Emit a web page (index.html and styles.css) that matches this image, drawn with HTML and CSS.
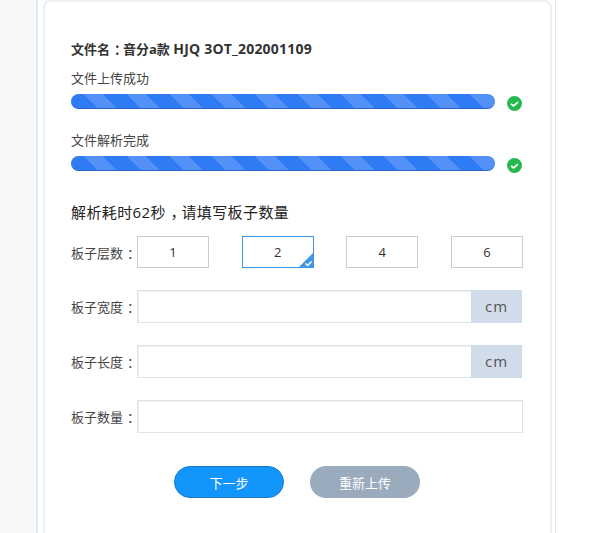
FILE: index.html
```html
<!DOCTYPE html>
<html lang="zh-CN">
<head>
    <meta charset="UTF-8">
    <title>文件解析</title>
    <link rel="stylesheet" href="styles.css">
</head>
<body>
    <div class="page">
        <div class="side"></div>
        <div class="main">
            <div class="card">
                <h3 class="file-name">文件名<span class="punct">：</span>音分a款 <span class="latin">HJQ 3OT_202001109</span></h3>

                <div class="progress-group">
                    <div class="progress-label">文件上传成功</div>
                    <div class="progress-row">
                        <div class="bar"></div>
                        <svg class="ok-icon" viewBox="0 0 16 16"><circle cx="8" cy="8" r="8" fill="#27b84f"/><path d="M4.2 8.3l2.7 2.3 4.8-4" fill="none" stroke="#fff" stroke-width="1.8"/></svg>
                    </div>
                </div>
                <div class="progress-group">
                    <div class="progress-label">文件解析完成</div>
                    <div class="progress-row">
                        <div class="bar"></div>
                        <svg class="ok-icon" viewBox="0 0 16 16"><circle cx="8" cy="8" r="8" fill="#27b84f"/><path d="M4.2 8.3l2.7 2.3 4.8-4" fill="none" stroke="#fff" stroke-width="1.8"/></svg>
                    </div>
                </div>

                <h4 class="hint">解析耗时62秒<span class="punct">，</span>请填写板子数量</h4>

                <div class="form-row">
                    <label>板子层数<span class="punct">：</span></label>
                    <div class="options">
                        <div class="option">1</div>
                        <div class="option active">2
                            <svg class="corner" viewBox="0 0 16 16"><path d="M16 0V16H0Z" fill="#3f97e8"/><path d="M7.5 11.5l2.2 2 3.8-4" fill="none" stroke="#fff" stroke-width="1.6"/></svg>
                        </div>
                        <div class="option">4</div>
                        <div class="option">6</div>
                    </div>
                </div>

                <div class="form-row">
                    <label for="width">板子宽度<span class="punct">：</span></label>
                    <div class="input-box">
                        <input type="text" id="width">
                        <span class="unit">cm</span>
                    </div>
                </div>
                <div class="form-row">
                    <label for="length">板子长度<span class="punct">：</span></label>
                    <div class="input-box">
                        <input type="text" id="length">
                        <span class="unit">cm</span>
                    </div>
                </div>
                <div class="form-row">
                    <label for="count">板子数量<span class="punct">：</span></label>
                    <div class="input-box full">
                        <input type="text" id="count">
                    </div>
                </div>

                <div class="actions">
                    <button class="btn btn-primary">下一步</button>
                    <button class="btn btn-gray">重新上传</button>
                </div>
            </div>
        </div>
    </div>
</body>
</html>
```

FILE: styles.css
```css
* {
    box-sizing: border-box;
}

html, body {
    height: 100%;
}

body {
    margin: 0;
    overflow: hidden;
    background-color: #fff;
    color: #333;
    font-family: "Open Sans", "Noto Sans CJK SC", sans-serif;
    font-size: 13px;
}

.page {
    display: flex;
    height: 533px;
}

.side {
    width: 36px;
    background-color: #f7f7f7;
}

.main {
    width: 520px;
    padding: 0 3px 0 5px;
    border-left: 2px solid #dce9f6;
    border-right: 1px solid #e3ebf2;
}

.card {
    height: 100%;
    padding: 38px 26px 0;
    border: 2px solid #ebf0f5;
    border-bottom: none;
    border-radius: 7px 7px 0 0;
    background-color: #fff;
}

/* half-width glyph with padding, so the mark sits in the middle of its cell */
.punct {
    font-feature-settings: "halt";
    padding-left: 0.3em;
    padding-right: 0.2em;
}

.file-name {
    margin: 0 0 11px;
    font-size: 13px;
    line-height: 18px;
    font-weight: 700;
    color: #333;
}

.file-name .latin {
    font-size: 14px;
    letter-spacing: 0.2px;
}

.progress-group {
    margin-bottom: 20px;
}

.progress-label {
    height: 18px;
    margin-bottom: 7px;
    font-size: 13px;
    line-height: 18px;
    color: #444;
}

.progress-row {
    display: flex;
    align-items: flex-start;
}

.bar {
    width: 424px;
    height: 15px;
    border-radius: 8px;
    border-bottom: 1px solid #2a68d0;
    background: repeating-linear-gradient(45deg, #2f7bf4 2.1px, #2f7bf4 18.4px, #5390f8 18.4px, #5390f8 32.5px);
}

.ok-icon {
    width: 15px;
    height: 15px;
    margin: 2px 0 0 12px;
}

.hint {
    margin: 29px 0 14px;
    font-size: 15px;
    letter-spacing: 0.4px;
    line-height: 20px;
    font-weight: 400;
    color: #222;
}

.form-row {
    display: flex;
    align-items: center;
    margin-bottom: 22px;
}

.form-row label {
    width: 66px;
    flex-shrink: 0;
    font-size: 13px;
    color: #444;
    white-space: nowrap;
}

.options {
    display: flex;
    justify-content: space-between;
    width: 386px;
}

.option {
    position: relative;
    width: 72px;
    height: 32px;
    border: 1px solid #ccc;
    font-size: 13px;
    line-height: 30px;
    text-align: center;
    color: #333;
}

.option.active {
    border-color: #3b95e6;
}

.corner {
    position: absolute;
    right: -1px;
    bottom: -1px;
    width: 16px;
    height: 16px;
}

.input-box {
    display: flex;
    width: 385px;
    height: 33px;
}

.input-box.full {
    width: 386px;
}

.input-box input {
    flex: 1;
    min-width: 0;
    height: 33px;
    padding: 0 8px;
    border: 1px solid #dde3e9;
    border-right: none;
    box-shadow: inset 1px 1px 0 #eef1f4;
    outline: none;
}

.input-box.full input {
    border-right: 1px solid #dde3e9;
}

.unit {
    width: 51px;
    background-color: #d0dcea;
    font-size: 15px;
    letter-spacing: 1px;
    line-height: 33px;
    text-align: center;
    color: #555;
}

.actions {
    display: flex;
    gap: 26px;
    margin-top: 33px;
    margin-left: 103px;
}

.btn {
    width: 110px;
    height: 32px;
    padding: 0;
    border-radius: 16px;
    color: #fff;
    font-family: inherit;
    font-size: 13px;
    cursor: pointer;
}

.btn-primary {
    background-color: #1296fc;
    border: 1px solid #1c78c4;
}

.btn-gray {
    background-color: #9aabbd;
    border: none;
}
```
